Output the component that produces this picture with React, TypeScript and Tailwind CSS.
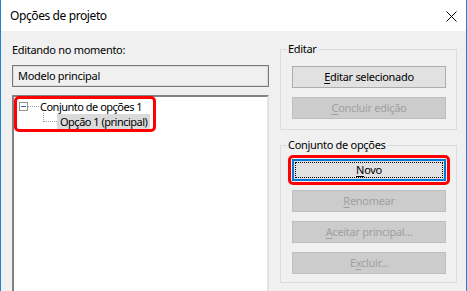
import React from 'react';

// Windows 10 style "Opções de projeto" dialog

const Btn = ({ children, disabled }: { children: React.ReactNode; disabled?: boolean }) => (
  <div
    className={`h-[22px] w-full flex items-center justify-center border leading-[16px] ${
      disabled ? 'bg-[#cccccc] border-[#bfbfbf] text-[#a0a0a0]' : 'bg-[#e1e1e1] border-[#adadad] text-black'
    }`}
  >
    {children}
  </div>
);

const U = ({ children }: { children: React.ReactNode }) => <span className="underline underline-offset-[2px]">{children}</span>;

export default function App() {
  return (
    <div className="w-[467px] h-[291px] overflow-hidden flex flex-col border-x border-[#1883d7] bg-[#f0f0f0] font-['Noto_Sans',sans-serif] text-[11px] tracking-[-0.3px] text-black">
      {/* Title bar */}
      <div className="h-[31px] shrink-0 bg-white flex items-center justify-between pl-[9px] pr-[9px]">
        <span className="text-[12px] tracking-[-0.4px] leading-[16px]">Opções de projeto</span>
        <svg width="11" height="11" viewBox="0 0 11 11" className="mt-[1px]">
          <path d="M0.5 0.5 L10.5 10.5 M10.5 0.5 L0.5 10.5" stroke="#000" strokeWidth="1" />
        </svg>
      </div>

      {/* Body */}
      <div className="flex flex-1 min-h-0 pl-[11px] gap-[11px]">
        {/* Left column */}
        <div className="w-[257px] flex flex-col pt-[11px]">
          <div className="leading-[16px]">Editando no momento:</div>
          <div className="mt-[7px] h-[22px] border border-[#7a7a7a] shadow-[inset_0_0_0_1px_#dcdcdc] flex items-center pl-[5px] leading-[16px]">
            Modelo principal
          </div>
          <div className="mt-[8px] flex-1 bg-white border-l-2 border-t-2 border-[#828282] border-r-2 border-r-[#e3e3e3]">
            <div className="-mt-[1px] w-[142px] h-[36px] border-[3px] border-[#ff0000] rounded-[5px] flex flex-col tracking-[-0.5px]">
              <div className="h-[15px] flex items-center whitespace-nowrap">
                <div className="ml-[2px] shrink-0 w-[9px] h-[9px] border border-[#919191] bg-white flex items-center justify-center">
                  <div className="w-[5px] h-[1px] bg-[#2a6cb0]" />
                </div>
                <div className="w-[11px] shrink-0 border-t border-dotted border-[#a0a0a0]" />
                <span className="ml-[1px] leading-[15px]">Conjunto de opções 1</span>
              </div>
              <div className="h-[15px] flex items-start whitespace-nowrap">
                <div className="ml-[26px] shrink-0 -mt-[1px] w-[14px] h-[9px] border-l border-b border-dotted border-[#a0a0a0]" />
                <span className="shrink-0 h-[15px] px-[3px] leading-[15px] bg-[#dadada]">Opção 1 (principal)</span>
              </div>
            </div>
          </div>
        </div>

        {/* Right column */}
        <div className="w-[177px] flex flex-col pt-[10px] gap-[7px]">
          <fieldset className="border border-[#dcdcdc] p-0 m-0">
            <legend className="ml-[6px] px-[1px] leading-[16px]">Editar</legend>
            <div className="flex flex-col gap-[9px] pl-[11px] pr-[10px] pt-[9px] pb-[10px]">
              <Btn>
                <span>
                  <U>E</U>ditar selecionado
                </span>
              </Btn>
              <Btn disabled>
                <span>
                  <U>C</U>oncluir edição
                </span>
              </Btn>
            </div>
          </fieldset>

          <fieldset className="border border-[#dcdcdc] p-0 m-0">
            <legend className="ml-[6px] px-[1px] leading-[16px]">Conjunto de opções</legend>
            <div className="flex flex-col gap-[9px] pl-[11px] pr-[10px] pt-[6px] pb-[8px]">
              <div className="-mx-[4px] -my-[4px] border-[3px] border-[#ff0000] rounded-[5px] p-[1px]">
                <div className="relative h-[22px] w-full flex items-center justify-center bg-[#e1e1e1] border-2 border-[#0078d7] leading-[16px]">
                  <span className="absolute inset-[1px] border border-dotted border-black" />
                  <span>
                    <U>N</U>ovo
                  </span>
                </div>
              </div>
              <Btn disabled>
                <span>
                  <U>R</U>enomear
                </span>
              </Btn>
              <Btn disabled>
                <span>
                  <U>A</U>ceitar principal...
                </span>
              </Btn>
              <Btn disabled>
                <span>
                  E<U>x</U>cluir...
                </span>
              </Btn>
            </div>
          </fieldset>
        </div>
      </div>
    </div>
  );
}
